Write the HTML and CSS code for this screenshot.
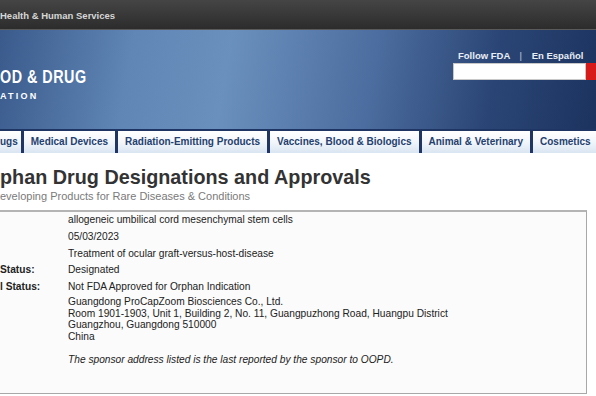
FILE: index.html
```html
<!DOCTYPE html>
<html lang="en">
<head>
  <meta charset="UTF-8" />
  <meta name="viewport" content="width=device-width, initial-scale=1.0"/>
  <title>Orphan Drug Designations and Approvals</title>
  <link rel="stylesheet" href="styles.css">
</head>
<body>
  <div class="topbar">Health &amp; Human Services</div>

  <header class="masthead">
    <div class="logo">
      <div class="logo-main">OD &amp; DRUG</div>
      <div class="logo-sub">ATION</div>
    </div>
    <div class="utility">
      <div class="util-links">
        <a href="#">Follow FDA</a>
        <span class="sep">|</span>
        <a href="#">En Español</a>
      </div>
      <form class="search">
        <input type="text" class="search-input" />
        <button type="button" class="search-btn"></button>
      </form>
    </div>
  </header>

  <nav class="tabs">
    <a class="tab" href="#">ugs</a>
    <a class="tab" href="#">Medical Devices</a>
    <a class="tab" href="#">Radiation-Emitting Products</a>
    <a class="tab" href="#">Vaccines, Blood &amp; Biologics</a>
    <a class="tab" href="#">Animal &amp; Veterinary</a>
    <a class="tab" href="#">Cosmetics</a>
  </nav>

  <main class="content">
    <h1 class="page-title">phan Drug Designations and Approvals</h1>
    <p class="subtitle">eveloping Products for Rare Diseases &amp; Conditions</p>

    <div class="record">
      <div class="row"><span class="label"></span><span class="value">allogeneic umbilical cord mesenchymal stem cells</span></div>
      <div class="row"><span class="label"></span><span class="value">05/03/2023</span></div>
      <div class="row"><span class="label"></span><span class="value">Treatment of ocular graft-versus-host-disease</span></div>
      <div class="row"><span class="label">Status:</span><span class="value">Designated</span></div>
      <div class="row"><span class="label">l Status:</span><span class="value">Not FDA Approved for Orphan Indication</span></div>
      <div class="row address">
        <span class="label"></span>
        <span class="value">
          Guangdong ProCapZoom Biosciences Co., Ltd.<br>
          Room 1901-1903, Unit 1, Building 2, No. 11, Guangpuzhong Road, Huangpu District<br>
          Guangzhou, Guangdong 510000<br>
          China
          <em class="note">The sponsor address listed is the last reported by the sponsor to OOPD.</em>
        </span>
      </div>
    </div>
  </main>
</body>
</html>
```

FILE: styles.css
```css
* {
  box-sizing: border-box;
}

html, body {
  margin: 0;
  padding: 0;
  width: 596px;
  height: 396px;
  overflow: hidden;
  background: #fff;
  font-family: 'Liberation Sans', Arial, sans-serif;
}

.topbar {
  height: 30px;
  line-height: 31px;
  background: linear-gradient(#454545, #2c2c2c);
  border-bottom: 1px solid #5a5a5a;
  color: #d6d6d6;
  font-size: 9.5px;
  font-weight: bold;
}

.masthead {
  height: 99px;
  display: flex;
  justify-content: space-between;
  background: linear-gradient(100deg, #3a5a8c 0%, #5f86b5 22%, #6a90bd 38%, #4c6d9f 62%, #2a4575 82%, #1c335f 100%);
  color: #fff;
}

.logo {
  padding-top: 37px;
}

/* the logo face is condensed; squeeze the bold sans to its width */
.logo-main {
  font-size: 17.5px;
  font-weight: bold;
  line-height: 20px;
  letter-spacing: 0.6px;
  white-space: nowrap;
  transform: scaleX(0.82);
  transform-origin: left center;
}

.logo-sub {
  font-size: 9px;
  font-weight: bold;
  letter-spacing: 2.2px;
  margin-top: 4px;
}

.utility {
  padding-top: 20px;
  width: 143px;
}

.util-links {
  font-size: 9.5px;
  font-weight: bold;
  padding-left: 5px;
  line-height: 12px;
  color: #e8eef6;
}

.util-links a {
  color: #e8eef6;
  text-decoration: none;
}

.util-links .sep {
  font-weight: normal;
  margin: 0 7px;
  color: #c0cde0;
}

.search {
  display: flex;
  margin-top: 1px;
}

.search-input {
  width: 133px;
  height: 17px;
  border: 1px solid #c8c8c8;
  padding: 0;
  background: #fff;
}

.search-btn {
  width: 14px;
  height: 17px;
  border: none;
  padding: 0;
  background: #d91a1a;
}

.tabs {
  display: flex;
  gap: 3px;
  padding-top: 2px;
  background: #1f3664;
}

.tab {
  height: 22px;
  line-height: 21px;
  padding: 0 7px;
  background: linear-gradient(#ffffff, #f2f6fb 50%, #d9e5f2);
  color: #24406e;
  font-size: 10px;
  font-weight: bold;
  text-decoration: none;
  white-space: nowrap;
}

.tab:first-child {
  padding: 0 3px 0 0;
}

.content {
  padding-top: 12px;
}

.page-title {
  margin: 0;
  font-size: 19.8px;
  line-height: 24px;
  font-weight: bold;
  color: #333;
}

.subtitle {
  margin: 0;
  font-size: 11px;
  line-height: 14px;
  color: #7a7a7a;
}

.record {
  margin-top: 7px;
  width: 587px;
  height: 184px;
  padding-top: 0;
  border: 1px solid #a8a8a8;
  border-left: none;
  border-top: 2px solid #b4b4b4;
  background: #fbfbfb;
  font-size: 10.2px;
  color: #222;
}

.row {
  display: flex;
  line-height: 16.75px;
}

.label {
  width: 68px;
  flex-shrink: 0;
  font-weight: bold;
}

.address {
  line-height: 11.8px;
}

.note {
  display: block;
  margin-top: 11px;
}
```
